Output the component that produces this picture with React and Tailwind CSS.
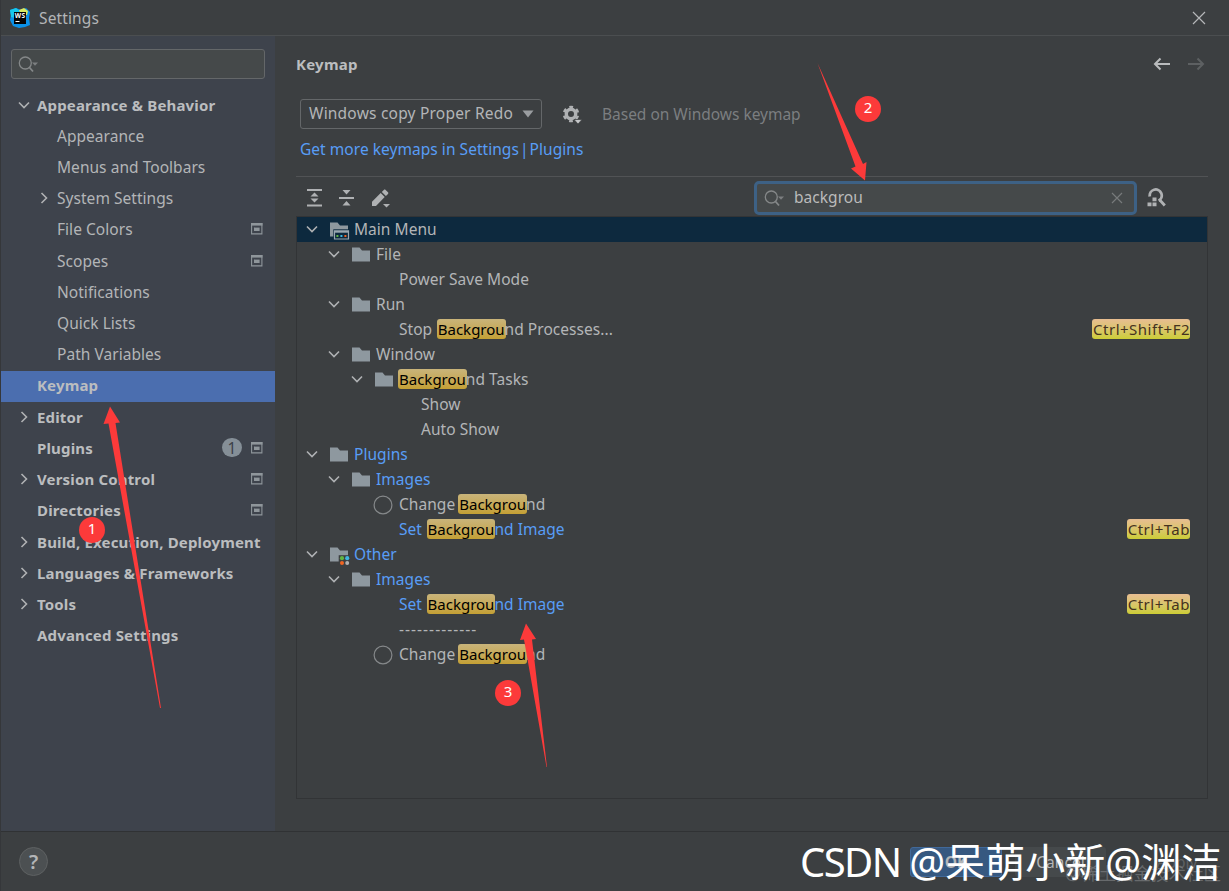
import clsx from "clsx";

const navItems = [
	{ label: "Appearance & Behavior", bold: true, arrow: "down" },
	{ label: "Appearance", level: 1 },
	{ label: "Menus and Toolbars", level: 1 },
	{ label: "System Settings", level: 1, arrow: "right" },
	{ label: "File Colors", level: 1, project: true },
	{ label: "Scopes", level: 1, project: true },
	{ label: "Notifications", level: 1 },
	{ label: "Quick Lists", level: 1 },
	{ label: "Path Variables", level: 1 },
	{ label: "Keymap", bold: true, active: true },
	{ label: "Editor", bold: true, arrow: "right" },
	{ label: "Plugins", bold: true, project: true, count: 1 },
	{ label: "Version Control", bold: true, arrow: "right", project: true },
	{ label: "Directories", bold: true, project: true },
	{ label: "Build, Execution, Deployment", bold: true, arrow: "right" },
	{ label: "Languages & Frameworks", bold: true, arrow: "right" },
	{ label: "Tools", bold: true, arrow: "right" },
	{ label: "Advanced Settings", bold: true },
];

const actions = [
	{ pad: "pl-[8px]", open: true, icon: "menu", text: "Main Menu", active: true },
	{ pad: "pl-[30px]", open: true, icon: "folder", text: "File" },
	{ pad: "pl-[102px]", text: "Power Save Mode" },
	{ pad: "pl-[30px]", open: true, icon: "folder", text: "Run" },
	{ pad: "pl-[102px]", before: "Stop ", hit: "Backgrou", text: "nd Processes...", keys: "Ctrl+Shift+F2" },
	{ pad: "pl-[30px]", open: true, icon: "folder", text: "Window" },
	{ pad: "pl-[53px]", open: true, icon: "folder", hit: "Backgrou", text: "nd Tasks" },
	{ pad: "pl-[124px]", text: "Show" },
	{ pad: "pl-[124px]", text: "Auto Show" },
	{ pad: "pl-[8px]", open: true, icon: "folder", text: "Plugins", blue: true },
	{ pad: "pl-[30px]", open: true, icon: "folder", text: "Images", blue: true },
	{ pad: "pl-[76px]", icon: "circle", before: "Change ", hit: "Backgrou", text: "nd" },
	{ pad: "pl-[102px]", before: "Set ", hit: "Backgrou", text: "nd Image", blue: true, keys: "Ctrl+Tab" },
	{ pad: "pl-[8px]", open: true, icon: "other", text: "Other", blue: true },
	{ pad: "pl-[30px]", open: true, icon: "folder", text: "Images", blue: true },
	{ pad: "pl-[102px]", before: "Set ", hit: "Backgrou", text: "nd Image", blue: true, keys: "Ctrl+Tab" },
	{ pad: "pl-[102px]", text: "-------------", separator: true },
	{ pad: "pl-[76px]", icon: "circle", before: "Change ", hit: "Backgrou", text: "nd" },
];

const Chevron = ({ dir }) => (
	<svg width="14" height="14" viewBox="0 0 14 14" fill="none" stroke="#afb1b3" strokeWidth="1.6" className="shrink-0">
		<path d={dir === "down" ? "M2 4.5l5 5 5-5" : "M4.5 2l5 5-5 5"} />
	</svg>
);

const SearchIcon = () => (
	<svg width="22" height="18" viewBox="0 0 22 18" fill="none" stroke="#858889" strokeWidth="1.3" className="shrink-0">
		<circle cx="7.3" cy="8" r="6" />
		<path d="M11.5 12.5l3.5 4" strokeWidth="1.8" />
		<path d="M14 7.5h6l-3 3.3z" fill="#7c7f80" stroke="none" />
	</svg>
);

const ProjectIcon = () => (
	<svg width="12" height="12" viewBox="0 0 12 12" className="shrink-0">
		<path d="M.6.6h10.3v10.3H.6z" fill="none" stroke="#8f969b" strokeWidth="1.1" />
		<path d="M0 0h11.5v2.6H0z" fill="#8f969b" />
		<path d="M3 4.6h5.6v3.4H3z" fill="#8f969b" />
	</svg>
);

const RowIcon = ({ type }) => {
	if (type === "circle") {
		return (
			<svg width="20" height="20" viewBox="0 0 20 20" className="mr-[6px] mt-px shrink-0">
				<circle cx="10" cy="10" r="8.9" fill="none" stroke="#85888a" strokeWidth="1.2" />
			</svg>
		);
	}
	return (
		<svg width="21" height="20" viewBox="0 0 21 20" className="ml-[10px] mr-[4px] mt-px shrink-0">
			<path d="M1 2.5h7.5l2.5 3h8v11H1z" fill="#8e989f" />
			{type === "menu" && (
				<>
					<path d="M4.3 9.3H20V20H4.3z" fill="#0d293e" />
					<path d="M5.5 11h14v8h-14z" fill="none" stroke="#9aa7b0" strokeWidth="1.2" />
					<path d="M5 10.5h15v2.2H5z" fill="#9aa7b0" />
					<path d="M7.4 15h2v2h-2z" fill="#62b543" />
					<path d="M11.4 15h2v2h-2z" fill="#40b6e0" />
					<path d="M15.4 15h2v2h-2z" fill="#f26522" />
				</>
			)}
			{type === "other" && (
				<>
					<path d="M9.7 10.2H21V20H9.7z" fill="#3c3f41" />
					<circle cx="13" cy="13.2" r="2.1" fill="#62b543" />
					<circle cx="18.2" cy="13.2" r="2.1" fill="#40b6e0" />
					<circle cx="13" cy="18" r="2" fill="#f26522" />
					<circle cx="18.2" cy="18" r="2" fill="#afb1b3" />
				</>
			)}
		</svg>
	);
};

const NavRow = ({ item }) => (
	<div
		className={clsx(
			"flex h-[31.23px] items-center pb-[2px] pr-3",
			item.level ? "pl-[36px]" : "pl-[16px]",
			item.active && "bg-[#4b6eaf]"
		)}
	>
		<div className="w-5 shrink-0">{item.arrow && <Chevron dir={item.arrow} />}</div>
		<span className={clsx("whitespace-nowrap", item.bold && "text-[15px] font-bold tracking-[0.16px] text-[#bbbdbf]")}>
			{item.label}
		</span>
		<div className="ml-auto flex items-center gap-[9px]">
			{item.count && (
				<span className="flex h-[19px] w-5 items-center justify-center rounded-full bg-[#858f97] text-[#3b4149]">
					{item.count}
				</span>
			)}
			{item.project && <ProjectIcon />}
		</div>
	</div>
);

const ActionRow = ({ row }) => (
	<div className={clsx("flex h-[25px] items-center pb-px pr-[17px]", row.pad, row.active && "bg-[#0d293e]")}>
		{row.open && <Chevron dir="down" />}
		{row.icon && <RowIcon type={row.icon} />}
		<span className={clsx("whitespace-pre", row.blue && "text-[#589df6]", row.separator && "tracking-[1.03px]")}>
			{row.before}
			{row.hit && (
				<span
					className={clsx(
						"-mr-px inline-block h-5 rounded-[3px] bg-linear-to-b from-[#c9b47a] to-[#c4a033] px-px text-[15px] leading-5 tracking-normal text-black",
						row.keys ? "ml-[0.5px]" : "-ml-px"
					)}
				>
					{row.hit}
				</span>
			)}
			{row.text}
		</span>
		{row.keys && (
			<span className="ml-auto h-5 rounded-[3px] bg-linear-to-b from-[#e8bd91] to-[#cccd33] pl-px text-[15px] leading-5 tracking-[0.5px] text-[#45321f]">
				{row.keys}
			</span>
		)}
	</div>
);

const Toolbar = () => (
	<div className="flex h-10 items-center border-t border-[#515355] pl-[9px] pt-0.5">
		<svg width="19" height="20" viewBox="0 0 19 20" fill="#afb1b3">
			<path d="M2 1h15v2H2zM2 16.5h15v2H2zM9.500 4.500l4 4h-8zM9.500 14.500l4-4h-8z" />
		</svg>
		<svg width="19" height="20" viewBox="0 0 19 20" fill="#afb1b3" className="ml-[13px]">
			<path d="M2 9h15v2H2zM5.500 2h8l-4 4.500zM5.500 17.500h8l-4-4.500z" />
		</svg>
		<svg width="21" height="21" viewBox="0 0 21 21" fill="#afb1b3" className="ml-[15px] mt-1">
			<path d="M1 17v-4.200l8.700-8.700 4 4L5 17zM10.800 3l2-2c.6-.6 1.200-.6 1.800 0L17 3.300c.5.500.5 1 0 1.600l-2.100 2.100z" />
			<path d="M12 15h7l-3.500 3.500z" />
		</svg>
		<div className="ml-[362px] flex h-[34px] w-[383px] items-center rounded-[5px] border-[3px] border-[#3d6185] bg-[#45494a] pl-[7px] pr-[11px]">
			<SearchIcon />
			<span className="ml-[8px] pb-0.5 text-[#bbbbbb]">backgrou</span>
			<svg width="12" height="12" viewBox="0 0 12 12" stroke="#777a7b" strokeWidth="1.2" className="ml-auto">
				<path d="M1 1l10 10M11 1L1 11" />
			</svg>
		</div>
		<svg width="20" height="20" viewBox="0 0 20 20" className="ml-[10px] mt-px">
			<path d="M2.800 8.500a6 6 0 1 1 8.800 4.300M12.800 12l5 5.500" fill="none" stroke="#afb1b3" strokeWidth="2.8" />
			<path d="M5.500 9.500h4v3.800h-4zM.5 14.500h4v3.800h-4zM5.500 14.500h4v3.800h-4z" fill="#afb1b3" />
		</svg>
	</div>
);

const Arrows = () => (
	<svg width="1229" height="891" viewBox="0 0 1229 891" fill="#fc3a3a" className="pointer-events-none absolute -left-px top-0">
		<path d="M110 406.500l10 16-4.500.5 45.500 285h-1L108.500 423.500l-5 .5z" />
		<path d="M817.500 63l45.500 101 3.500-2-1.500 18.500-14-12 4.500-2z" />
		<path d="M526 623.500l10 15.500-4 .5L547 767h-.5L524 639.500l-4 .5z" />
	</svg>
);

const Marker = ({ n, className }) => (
	<span
		className={clsx(
			"absolute flex size-[26px] items-center justify-center rounded-full bg-[#fc3a3a] pb-[5px] text-[15px] tracking-normal text-white",
			className
		)}
	>
		{n}
	</span>
);

const App = () => {
	return (
		<div className="relative flex h-[891px] w-[1229px] flex-col overflow-hidden border-l border-[#35373a] bg-[#3c3f41] font-['Noto_Sans','Noto_Sans_CJK_SC',sans-serif] text-[15.5px] leading-6 tracking-[0.04px] text-[#b3b5b7]">
			{/* Title bar */}
			<div className="flex h-9 shrink-0 items-center border-b border-[#4b4e50] pl-[9px] pr-[23px]">
				<svg width="20" height="20" viewBox="0 0 20 20">
					<path d="M0 2L6 0l5 2 5-2 4 4-1 6 1 7-5 2-6 1-6-2-3-6 1-5z" fill="#0b91e8" />
					<path d="M0 2L6 0l4 3-5 7-4-1z" fill="#16c8ec" />
					<path d="M9 2l5-2 4 3-1 4h-6z" fill="#d9ea62" />
					<path d="M4 4h12v12H4z" fill="#050505" />
					<text x="4.7" y="9.8" fontSize="6.5" fontWeight="700" fill="#fff" textLength="10.5">WS</text>
					<path d="M5.500 13h4v1h-4z" fill="#fff" />
				</svg>
				<span className="ml-[9px] mt-px tracking-[0.12px]">Settings</span>
				<svg width="14" height="14" viewBox="0 0 14 14" stroke="#b5b7b9" strokeWidth="1.2" className="ml-auto">
					<path d="M1 1l12 12M13 1L1 13" />
				</svg>
			</div>

			<div className="flex min-h-0 flex-1">
				{/* Sidebar */}
				<div className="w-[274px] shrink-0 bg-[#3e434c] pt-[13px]">
					<div className="ml-[10px] flex h-[30px] w-[254px] items-center rounded-[3px] border border-[#646769] bg-[#45494a] pl-[6px]">
						<SearchIcon />
					</div>
					<div className="mt-[10.9px]">
						{navItems.map((item) => (
							<NavRow key={item.label} item={item} />
						))}
					</div>
				</div>

				{/* Keymap page */}
				<div className="flex w-[954px] flex-col px-[21px] pt-4">
					<div className="flex h-6 items-center">
						<h1 className="text-[15px] font-bold tracking-[0.25px] text-[#bbbdbf]">Keymap</h1>
						<svg width="18" height="14" viewBox="0 0 18 14" fill="none" stroke="#b9bbbd" strokeWidth="2" className="ml-auto">
							<path d="M17 7H2M7.500 1.500L2 7l5.500 5.500" />
						</svg>
						<svg width="18" height="14" viewBox="0 0 18 14" fill="none" stroke="#5d6062" strokeWidth="2" className="ml-4 mr-[3px]">
							<path d="M1 7h15M10.500 1.500L16 7l-5.500 5.500" />
						</svg>
					</div>

					<div className="ml-1 mt-[22px] flex h-[31px] items-center">
						<div className="flex h-[30px] w-[242px] items-center rounded-[3px] border border-[#646769] pl-2 pr-[7px]">
							<span className="whitespace-nowrap pb-px tracking-[0.21px]">Windows copy Proper Redo</span>
							<svg width="12" height="8" viewBox="0 0 12 8" fill="#9a9da0" className="ml-auto">
								<path d="M.5.5h11L6 7.500z" />
							</svg>
						</div>
						<svg width="20" height="20" viewBox="0 0 20 20" className="ml-[20px] mt-[3px]">
							<circle cx="9" cy="9" r="4.7" fill="none" stroke="#afb1b3" strokeWidth="3.4" />
							<circle cx="9" cy="9" r="7" fill="none" stroke="#afb1b3" strokeWidth="2.6" strokeDasharray="3.67 3.66" strokeDashoffset="-1.8" />
							<path d="M12 14.500h8l-4 4.500z" fill="#c6c8ca" stroke="#3c3f41" strokeWidth=".7" />
						</svg>
						<span className="ml-5 tracking-[-0.02px] text-[#7b7e80]">Based on Windows keymap</span>
					</div>
					<a className="ml-1 mt-[8px] h-6 whitespace-nowrap text-[#589df6]">
						Get more keymaps in Settings <span className="-mx-[3px]">|</span> Plugins
					</a>

					<div className="mt-[15px]">
						<Toolbar />
						<div className="h-[583px] border border-[#323436]">
							{actions.map((row, i) => (
								<ActionRow key={i} row={row} />
							))}
						</div>
					</div>
				</div>
			</div>

			{/* Footer */}
			<div className="flex h-[60px] shrink-0 items-center border-t border-[#303234] pl-[18px]">
				<span className="flex size-[29px] items-center justify-center rounded-full border border-[#5e6162] bg-[#4c5052] text-[20px] font-semibold tracking-normal">
					?
				</span>
				<div className="ml-auto mr-[-6px] flex gap-[13px]">
					<span className="flex h-[30px] w-[92px] items-center justify-center rounded-[3px] border border-[#41699a] bg-[#365880] font-bold">OK</span>
					<span className="flex h-[30px] w-[91px] items-center justify-center rounded-[3px] bg-[#45494b]">Cancel</span>
					<span className="flex h-[30px] w-[116px] items-center justify-center rounded-[3px] text-[#5e6163]">Apply</span>
				</div>
			</div>

			<Arrows />
			<Marker n={1} className="left-[78px] top-[517px]" />
			<Marker n={2} className="left-[854px] top-[96px]" />
			<Marker n={3} className="left-[494px] top-[680px]" />

			{/* Watermarks */}
			<span className="absolute right-[8px] top-[861px] whitespace-nowrap text-[17.5px] tracking-normal text-[#85888a]/60">
				@稀土掘金技术社区
			</span>
			<span className="absolute left-[799px] top-[837px] whitespace-nowrap text-[40px] leading-[50px] tracking-normal text-white">
				<span className="tracking-[-1.6px]">CSDN </span>@呆萌小新@渊洁
			</span>
		</div>
	);
};

export default App;
